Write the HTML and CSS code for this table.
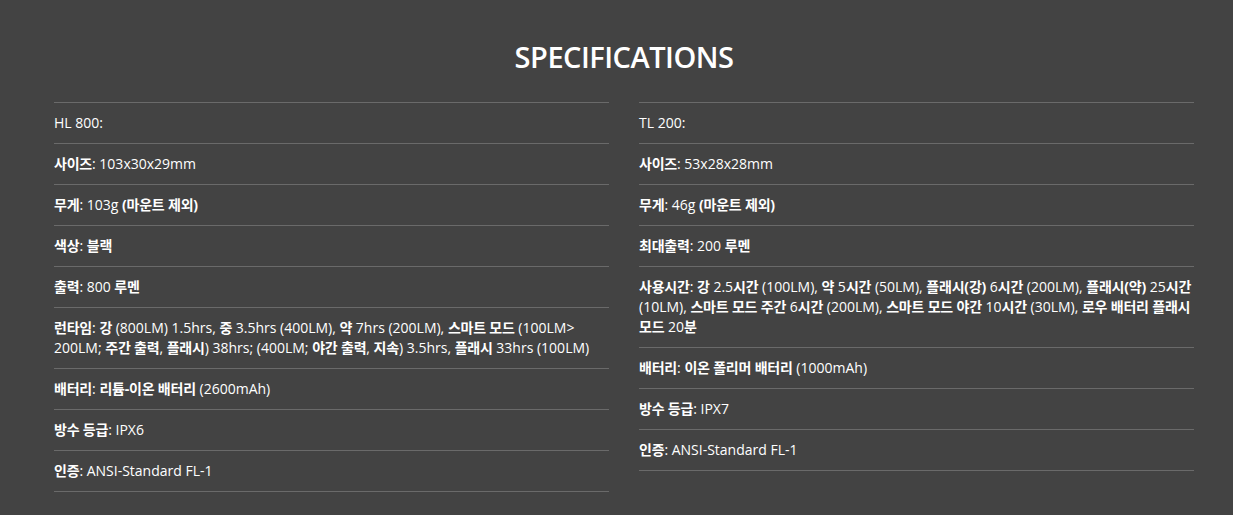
FILE: index.html
```html
<!DOCTYPE html>
<html lang="ko">
<head>
<meta charset="utf-8">
<link rel="stylesheet" href="styles.css">
</head>
<body>
<section class="specs">
  <h2 class="specs-title">SPECIFICATIONS</h2>
  <div class="specs-cols">
    <ul class="spec-list">
      <li>HL 800:</li>
      <li><b>사이즈</b>: 103x30x29mm</li>
      <li><b>무게</b>: 103g <b>(마운트 제외)</b></li>
      <li><b>색상</b>: <b>블랙</b></li>
      <li><b>출력</b>: 800 <b>루멘</b></li>
      <li><b>런타임</b>: <b>강</b> (800LM) 1.5hrs, <b>중</b> 3.5hrs (400LM), <b>약</b> 7hrs (200LM), <b>스마트 모드</b> (100LM&gt; 200LM; <b>주간 출력</b>, <b>플래시</b>) 38hrs; (400LM; <b>야간 출력</b>, <b>지속</b>) 3.5hrs, <b>플래시</b> 33hrs (100LM)</li>
      <li><b>배터리</b>: <b>리튬-이온 배터리</b> (2600mAh)</li>
      <li><b>방수 등급</b>: IPX6</li>
      <li><b>인증</b>: ANSI-Standard FL-1</li>
    </ul>
    <ul class="spec-list">
      <li>TL 200:</li>
      <li><b>사이즈</b>: 53x28x28mm</li>
      <li><b>무게</b>: 46g <b>(마운트 제외)</b></li>
      <li><b>최대출력</b>: 200 <b>루멘</b></li>
      <li><b>사용시간</b>: <b>강</b> 2.5<b>시간</b> (100LM), <b>약</b> 5<b>시간</b> (50LM), <b>플래시(강)</b> 6<b>시간</b> (200LM), <b>플래시(약)</b> 25<b>시간</b> (10LM), <b>스마트 모드 주간</b> 6<b>시간</b> (200LM), <b>스마트 모드 야간</b> 10<b>시간</b> (30LM), <b>로우 배터리 플래시 모드</b> 20<b>분</b></li>
      <li><b>배터리</b>: <b>이온 폴리머 배터리</b> (1000mAh)</li>
      <li><b>방수 등급</b>: IPX7</li>
      <li><b>인증</b>: ANSI-Standard FL-1</li>
    </ul>
  </div>
</section>
</body>
</html>
```
FILE: styles.css
```css
html, body {
  margin: 0;
  padding: 0;
  background: #434343;
}
body {
  font-family: "Open Sans", "Noto Sans CJK KR", sans-serif;
  color: #ffffff;
}
.specs {
  padding: 37px 39px 20px 54px;
}
.specs-title {
  margin: 0 0 25px;
  text-align: center;
  font-size: 29px;
  line-height: 40px;
  font-weight: 600;
  letter-spacing: -0.5px;
}
.specs-cols {
  display: grid;
  grid-template-columns: 555px 555px;
  column-gap: 30px;
  align-items: start;
}
.spec-list {
  list-style: none;
  margin: 0;
  padding: 0;
  border-bottom: 1px solid #6a6a6a;
}
.spec-list li {
  border-top: 1px solid #6a6a6a;
  padding: 10px 0;
  font-size: 14px;
  line-height: 20px;
}
.spec-list b {
  font-weight: 700;
  letter-spacing: -0.2px;
}
```
